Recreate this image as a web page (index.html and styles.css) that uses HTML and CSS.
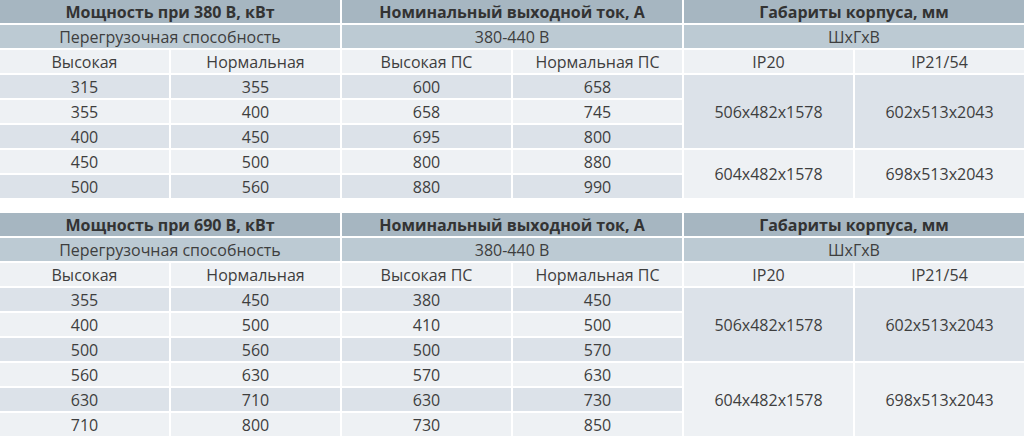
FILE: index.html
```html
<!DOCTYPE html>
<html lang="ru">
<head>
<meta charset="utf-8">
<title>Таблица</title>
<link rel="stylesheet" href="styles.css">
</head>
<body>
<div class="page">
  <div class="tbl t1">
    <div class="c h s2">Мощность при 380 В, кВт</div>
    <div class="c h s2">Номинальный выходной ток, А</div>
    <div class="c h s2">Габариты корпуса, мм</div>
    <div class="c sub s2">Перегрузочная способность</div>
    <div class="c sub s2">380-440 В</div>
    <div class="c sub s2">ШхГхВ</div>
    <div class="c lt">Высокая</div>
    <div class="c lt">Нормальная</div>
    <div class="c lt">Высокая ПС</div>
    <div class="c lt">Нормальная ПС</div>
    <div class="c lt">IP20</div>
    <div class="c lt">IP21/54</div>

    <div class="c dk">315</div><div class="c dk">355</div><div class="c dk">600</div><div class="c dk">658</div>
    <div class="c dk r3">506x482x1578</div><div class="c dk r3">602x513x2043</div>
    <div class="c lt">355</div><div class="c lt">400</div><div class="c lt">658</div><div class="c lt">745</div>
    <div class="c dk">400</div><div class="c dk">450</div><div class="c dk">695</div><div class="c dk">800</div>
    <div class="c lt">450</div><div class="c lt">500</div><div class="c lt">800</div><div class="c lt">880</div>
    <div class="c lt r2">604x482x1578</div><div class="c lt r2">698x513x2043</div>
    <div class="c dk">500</div><div class="c dk">560</div><div class="c dk">880</div><div class="c dk">990</div>
  </div>

  <div class="tbl t2">
    <div class="c h s2">Мощность при 690 В, кВт</div>
    <div class="c h s2">Номинальный выходной ток, А</div>
    <div class="c h s2">Габариты корпуса, мм</div>
    <div class="c sub s2">Перегрузочная способность</div>
    <div class="c sub s2">380-440 В</div>
    <div class="c sub s2">ШхГхВ</div>
    <div class="c lt">Высокая</div>
    <div class="c lt">Нормальная</div>
    <div class="c lt">Высокая ПС</div>
    <div class="c lt">Нормальная ПС</div>
    <div class="c lt">IP20</div>
    <div class="c lt">IP21/54</div>

    <div class="c dk">355</div><div class="c dk">450</div><div class="c dk">380</div><div class="c dk">450</div>
    <div class="c dk r3">506x482x1578</div><div class="c dk r3">602x513x2043</div>
    <div class="c lt">400</div><div class="c lt">500</div><div class="c lt">410</div><div class="c lt">500</div>
    <div class="c dk">500</div><div class="c dk">560</div><div class="c dk">500</div><div class="c dk">570</div>
    <div class="c lt">560</div><div class="c lt">630</div><div class="c lt">570</div><div class="c lt">630</div>
    <div class="c lt r3">604x482x1578</div><div class="c lt r3">698x513x2043</div>
    <div class="c dk">630</div><div class="c dk">710</div><div class="c dk">630</div><div class="c dk">730</div>
    <div class="c lt">710</div><div class="c lt">800</div><div class="c lt">730</div><div class="c lt">850</div>
  </div>
</div>
</body>
</html>
```

FILE: styles.css
```css
html, body {
  margin: 0;
  padding: 0;
  background: #ffffff;
}

.page {
  width: 1024px;
  display: flex;
  flex-direction: column;
  gap: 15px;
  font-family: "Open Sans", "Noto Sans", "DejaVu Sans", sans-serif;
  font-size: 16px;
  color: #3e3e3e;
}

.tbl {
  display: grid;
  grid-template-columns: repeat(6, 1fr);
  grid-auto-rows: 23px;
  column-gap: 2px;
  row-gap: 2px;
}

.c {
  display: flex;
  align-items: center;
  justify-content: center;
  white-space: nowrap;
  line-height: 1;
}

.s2 { grid-column: span 2; }
.r2 { grid-row: span 2; }
.r3 { grid-row: span 3; }

.h {
  background: #a6b6c1;
  font-weight: 700;
  color: #333333;
}

.sub {
  background: #bccad3;
}

.lt {
  background: #eef1f4;
}

.dk {
  background: #dce2e9;
}
```
